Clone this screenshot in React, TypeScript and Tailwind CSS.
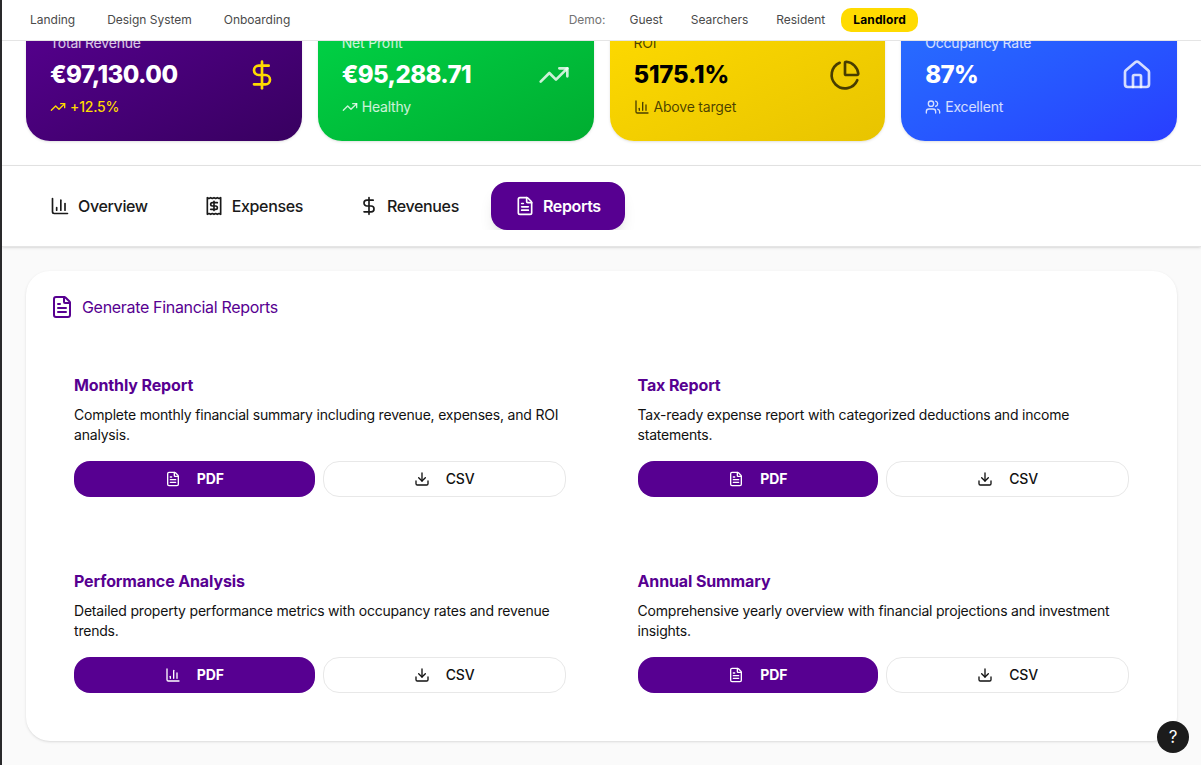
import type { ReactNode } from 'react';
import {
  ChartColumn,
  ChartPie,
  DollarSign,
  Download,
  FileText,
  House,
  TrendingUp,
  Users,
} from 'lucide-react';
import type { LucideIcon } from 'lucide-react';

function ReceiptDollar({ className }: { className?: string }) {
  return (
    <svg className={className} viewBox="0 0 24 24" fill="none" stroke="currentColor" strokeWidth="2" strokeLinecap="round" strokeLinejoin="round">
      <path d="M4 2v20l2-1 2 1 2-1 2 1 2-1 2 1 2-1 2 1V2l-2 1-2-1-2 1-2-1-2 1-2-1-2 1Z" />
      <path d="M16 8h-6a2 2 0 1 0 0 4h4a2 2 0 1 1 0 4H8" />
      <path d="M12 17.5v-11" />
    </svg>
  );
}

function NavButton({ children, active = false }: { children: ReactNode; active?: boolean }) {
  return (
    <button
      className={
        active
          ? 'h-6 rounded-[10px] bg-[#ffdb00] px-3 text-xs font-bold tracking-[0.15px] text-black'
          : 'h-6 rounded-[10px] px-3 text-xs tracking-[-0.02px] text-[#4a4a4a]'
      }
    >
      {children}
    </button>
  );
}

type StatProps = {
  label: string;
  value: string;
  note: string;
  card: string;
  valueTracking: string;
  labelColor: string;
  noteColor: string;
  iconColor: string;
  noteIcon: LucideIcon;
  icon: LucideIcon;
};

const stats: StatProps[] = [
  { label: 'Total Revenue', value: '€97,130.00', note: '+12.5%', card: 'from-[#570091] to-[#380060] text-white', valueTracking: 'tracking-[-0.5px]', labelColor: 'text-white/80', noteColor: 'text-[#ffdb00] font-medium', iconColor: 'text-[#ffdb00]', noteIcon: TrendingUp, icon: DollarSign },
  { label: 'Net Profit', value: '€95,288.71', note: 'Healthy', card: 'from-[#00d447] to-[#00ad30] text-white', valueTracking: 'tracking-[-0.6px]', labelColor: 'text-white/80', noteColor: 'text-white/80', iconColor: 'text-white/80', noteIcon: TrendingUp, icon: TrendingUp },
  { label: 'ROI', value: '5175.1%', note: 'Above target', card: 'from-[#ffdb00] to-[#e8c400] text-black', valueTracking: 'tracking-[-0.2px]', labelColor: 'text-black/70', noteColor: 'text-black/70', iconColor: 'text-black/70', noteIcon: ChartColumn, icon: ChartPie },
  { label: 'Occupancy Rate', value: '87%', note: 'Excellent', card: 'from-[#2970ff] to-[#293dff] text-white', valueTracking: 'tracking-[-0.7px]', labelColor: 'text-white/80', noteColor: 'text-white/80', iconColor: 'text-white/80', noteIcon: Users, icon: House },
];

function StatCard({ label, value, note, card, valueTracking, labelColor, noteColor, iconColor, noteIcon: NoteIcon, icon: Icon }: StatProps) {
  return (
    <div className={`flex items-center justify-between rounded-3xl bg-linear-to-br p-6 shadow-sm ${card}`}>
      <div>
        <p className={`mb-1 text-sm tracking-[-0.2px] ${labelColor}`}>{label}</p>
        <p className={`-mb-1 text-2xl leading-9 font-extrabold ${valueTracking}`}>{value}</p>
        <p className={`mt-2 flex items-center gap-1 text-sm tracking-[-0.2px] ${noteColor}`}>
          <NoteIcon className="size-4" />
          {note}
        </p>
      </div>
      <Icon className={`size-8 ${iconColor}`} />
    </div>
  );
}

function Tab({ icon, label, active = false }: { icon: ReactNode; label: string; active?: boolean }) {
  return (
    <button
      className={
        active
          ? 'flex h-12 items-center gap-2 rounded-2xl bg-[#570091] px-6 font-semibold tracking-[-0.36px] text-white shadow-lg'
          : 'flex h-12 items-center gap-2 rounded-2xl px-6 font-medium tracking-[-0.36px] text-[#1a1a1a]'
      }
    >
      {icon}
      {label}
    </button>
  );
}

function Report({ title, text, icon: Icon = FileText }: { title: string; text: string; icon?: LucideIcon }) {
  return (
    <div className="p-6">
      <h3 className="mb-2 font-bold tracking-[-0.12px] text-[#570091]">{title}</h3>
      <p className="mb-4 text-sm tracking-[-0.2px] text-[#111111]">{text}</p>
      <div className="flex gap-2">
        <button className="flex h-9 flex-1 items-center justify-center gap-4 rounded-2xl bg-[#570091] px-3 text-sm font-bold tracking-[-0.1px] text-white">
          <Icon className="size-4" />
          PDF
        </button>
        <button className="flex h-9 flex-1 items-center justify-center gap-4 rounded-2xl border border-[#e8e8e8] bg-white px-3 text-sm font-medium tracking-[-0.2px] text-[#111111]">
          <Download className="size-4" />
          CSV
        </button>
      </div>
    </div>
  );
}

export default function App() {
  return (
    <div className="relative h-[765px] overflow-hidden border-l-2 border-[#29292b] bg-[#fafafa] font-['Inter',sans-serif] text-base">
      <header className="relative z-10 flex h-[41px] items-center border-b border-[#e5e5e5] bg-white pr-[283px] pl-4">
        <nav className="flex gap-2">
          <NavButton>Landing</NavButton>
          <NavButton>Design System</NavButton>
          <NavButton>Onboarding</NavButton>
        </nav>
        <div className="ml-auto flex items-center gap-1">
          <span className="mr-2 text-xs text-[#737373]">Demo:</span>
          <NavButton>Guest</NavButton>
          <NavButton>Searchers</NavButton>
          <NavButton>Resident</NavButton>
          <NavButton active>Landlord</NavButton>
        </div>
      </header>

      <section className="-mt-8 grid grid-cols-4 gap-4 border-b border-[#e5e5e5] bg-white px-6 pb-6">
        {stats.map((s) => (
          <StatCard key={s.label} {...s} />
        ))}
      </section>

      <section className="border-b border-[#e5e5e5] bg-white px-6 py-4 shadow-sm">
        <div className="flex gap-2 overflow-hidden">
          <Tab icon={<ChartColumn className="size-5" />} label="Overview" />
          <Tab icon={<ReceiptDollar className="size-5" />} label="Expenses" />
          <Tab icon={<DollarSign className="size-5" />} label="Revenues" />
          <Tab icon={<FileText className="size-5" />} label="Reports" active />
        </div>
      </section>

      <main className="p-6">
        <div className="rounded-3xl bg-white p-6 shadow-sm">
          <h2 className="mb-[30px] flex items-center gap-2 tracking-[-0.32px] text-[#570091]">
            <FileText className="size-6" />
            Generate Financial Reports
          </h2>
          <div className="grid grid-cols-2 gap-6">
            <Report title="Monthly Report" text="Complete monthly financial summary including revenue, expenses, and ROI analysis." />
            <Report title="Tax Report" text="Tax-ready expense report with categorized deductions and income statements." />
            <Report title="Performance Analysis" text="Detailed property performance metrics with occupancy rates and revenue trends." icon={ChartColumn} />
            <Report title="Annual Summary" text="Comprehensive yearly overview with financial projections and investment insights." />
          </div>
        </div>
      </main>

      <button className="absolute right-3 bottom-3 z-20 flex size-8 items-center justify-center rounded-full bg-[#1c1c1c] pt-px text-[17px] text-white">
        ?
      </button>
    </div>
  );
}
